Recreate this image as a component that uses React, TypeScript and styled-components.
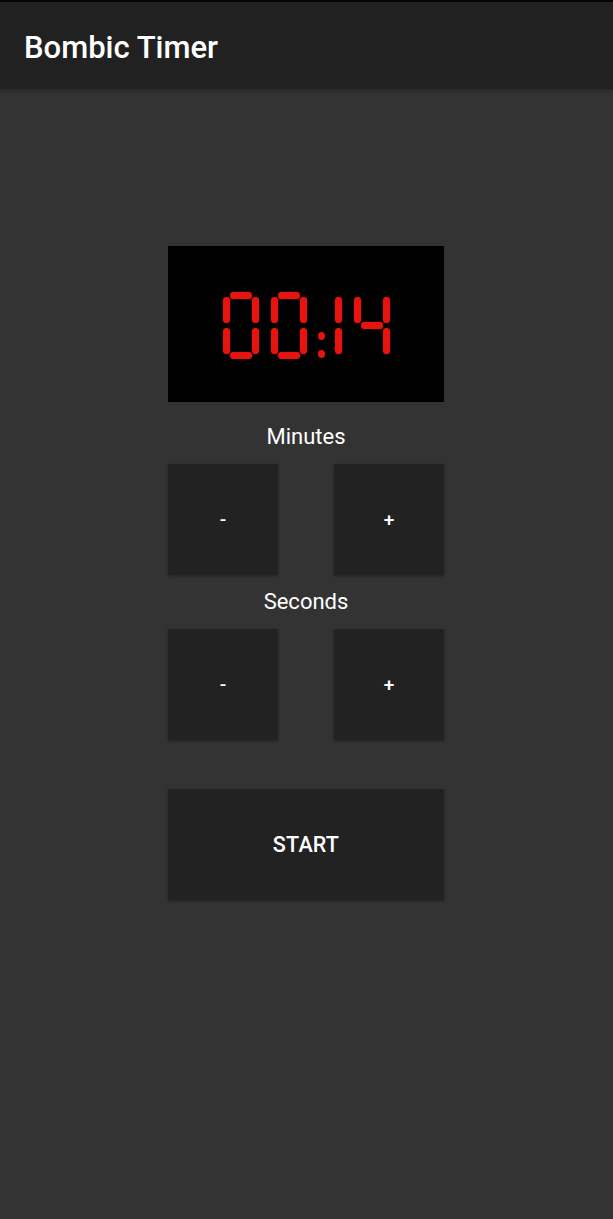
import React from "react";
import styled, { createGlobalStyle } from "styled-components";

const GlobalStyle = createGlobalStyle`
  html, body {
    margin: 0;
    padding: 0;
    background: #333333;
    font-family: Roboto, "Noto Sans", "Liberation Sans", sans-serif;
  }
  #root {
    min-height: 1219px;
    background: #333333;
  }
`;

const Page = styled.div`
  min-height: 1219px;
  display: flex;
  flex-direction: column;
  background: #333333;
`;

const AppBar = styled.header`
  height: 87px;
  border-top: 2px solid #050505;
  background: #212121;
  display: flex;
  align-items: center;
  padding-left: 24px;
  box-shadow: 0 2px 4px rgba(0, 0, 0, 0.25);
  position: relative;
  z-index: 1;
`;

const Title = styled.h1`
  margin: 0;
  color: #ffffff;
  font-size: 31px;
  font-weight: 500;
  letter-spacing: 0;
  padding-top: 3px;
`;

const Content = styled.main`
  width: 276px;
  margin: 157px 0 0 calc(50% - 138.5px);
  display: flex;
  flex-direction: column;
`;

const Display = styled.div`
  height: 156px;
  background: #000000;
  display: flex;
  align-items: center;
  justify-content: center;
  padding-top: 3px;
  box-sizing: border-box;
  margin-bottom: 8px;
`;

const DigitRow = styled.div`
  display: flex;
  align-items: flex-start;
  margin-left: 1px;
`;

const DigitBox = styled.div<{ $narrow?: boolean; $gap: number }>`
  position: relative;
  width: ${(p) => (p.$narrow ? 7 : 36)}px;
  height: 67px;
  margin-left: ${(p) => p.$gap}px;
`;

const red = "#e8130e";

const Seg = styled.span<{ $h: boolean; $x: number; $y: number }>`
  position: absolute;
  left: ${(p) => p.$x}px;
  top: ${(p) => p.$y}px;
  width: ${(p) => (p.$h ? 22 : 7)}px;
  height: ${(p) => (p.$h ? 7 : 26)}px;
  border-radius: 3.5px;
  background: ${red};
  box-shadow: 0 0 1.5px rgba(232, 19, 14, 0.6);
`;

const ColonBox = styled.div<{ $gap: number }>`
  width: 7px;
  height: 67px;
  margin-left: ${(p) => p.$gap}px;
  display: flex;
  flex-direction: column;
  gap: 10px;
  padding-top: 40px;
  box-sizing: border-box;
`;

const Dot = styled.span`
  width: 7px;
  height: 8px;
  border-radius: 50%;
  background: ${red};
`;

// segments: a top, b top-right, c bottom-right, d bottom, e bottom-left, f top-left, g middle
const MAP: Record<string, string> = {
  "0": "abcdef",
  "1": "bc",
  "2": "abged",
  "3": "abgcd",
  "4": "fgbc",
  "5": "afgcd",
  "6": "afgedc",
  "7": "abc",
  "8": "abcdefg",
  "9": "abcdfg",
};

function Digit({ d, gap, narrow }: { d: string; gap: number; narrow?: boolean }) {
  const on = MAP[d] || "";
  const r = narrow ? 0 : 29;
  const segs: { k: string; h: boolean; x: number; y: number }[] = [
    { k: "a", h: true, x: 7, y: 0 },
    { k: "b", h: false, x: r, y: 5 },
    { k: "c", h: false, x: r, y: 36 },
    { k: "d", h: true, x: 7, y: 60 },
    { k: "e", h: false, x: 0, y: 36 },
    { k: "f", h: false, x: 0, y: 5 },
    { k: "g", h: true, x: 7, y: 30 },
  ];
  return (
    <DigitBox $narrow={narrow} $gap={gap} aria-hidden="true">
      {segs
        .filter((s) => on.includes(s.k))
        .map((s) => (
          <Seg key={s.k} $h={s.h} $x={s.x} $y={s.y} />
        ))}
    </DigitBox>
  );
}

const Label = styled.div`
  height: 26px;
  line-height: 26px;
  margin: 14px 0 14px;
  text-align: center;
  color: #ffffff;
  font-size: 22px;
  font-weight: 400;
`;

const ButtonRow = styled.div`
  display: flex;
  justify-content: space-between;
`;

const Button = styled.button<{ $wide?: boolean }>`
  width: ${(p) => (p.$wide ? "276px" : "110px")};
  height: 111px;
  border: none;
  border-radius: 0;
  background: #222222;
  color: #ffffff;
  font-family: Roboto, "Noto Sans", "Liberation Sans", sans-serif;
  font-size: ${(p) => (p.$wide ? "21.5px" : "19px")};
  font-weight: 500;
  letter-spacing: 0.2px;
  box-shadow: 0 1px 3px rgba(0, 0, 0, 0.35);
  padding: 0;
  cursor: pointer;
`;

const StartWrap = styled.div`
  margin-top: 49px;
  display: flex;
`;

export default function App() {
  const time = "00:14";
  return (
    <Page>
      <GlobalStyle />
      <AppBar>
        <Title>Bombic Timer</Title>
      </AppBar>
      <Content>
        <Display role="img" aria-label={time} title={time}>
          <DigitRow>
            <Digit d="0" gap={0} />
            <Digit d="0" gap={12} />
            <ColonBox $gap={11}>
              <Dot />
              <Dot />
            </ColonBox>
            <Digit d="1" gap={10} narrow />
            <Digit d="4" gap={12} />
          </DigitRow>
        </Display>
        <Label>Minutes</Label>
        <ButtonRow>
          <Button>-</Button>
          <Button>+</Button>
        </ButtonRow>
        <Label>Seconds</Label>
        <ButtonRow>
          <Button>-</Button>
          <Button>+</Button>
        </ButtonRow>
        <StartWrap>
          <Button $wide>START</Button>
        </StartWrap>
      </Content>
    </Page>
  );
}
